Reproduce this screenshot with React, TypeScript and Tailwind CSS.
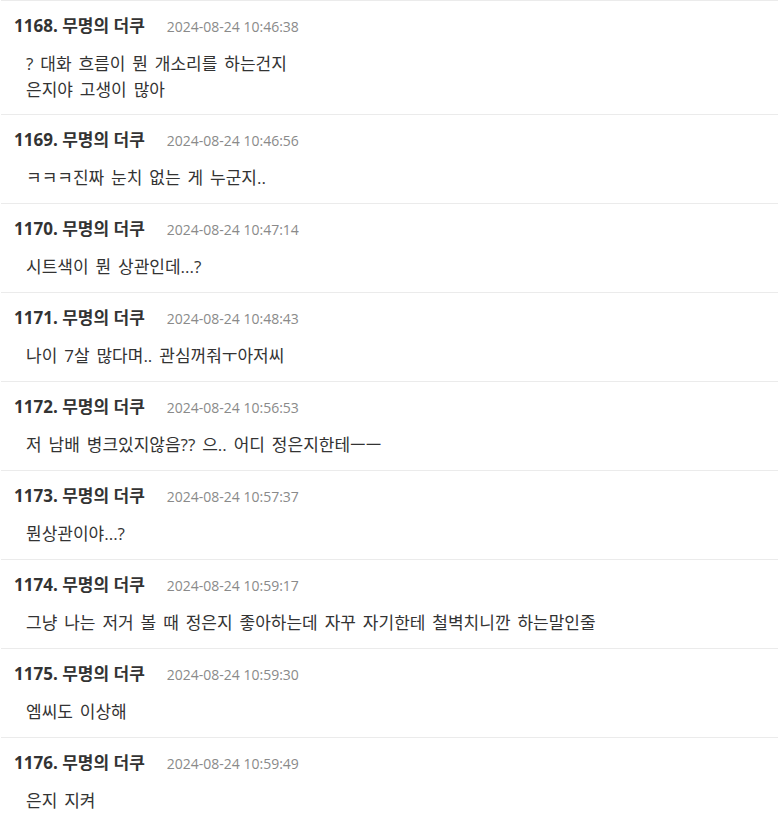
import React from "react";

const comments = [
  { no: 1168, date: "2024-08-24 10:46:38", lines: ["? 대화 흐름이 뭔 개소리를 하는건지", "은지야 고생이 많아"] },
  { no: 1169, date: "2024-08-24 10:46:56", lines: ["ㅋㅋㅋ진짜 눈치 없는 게 누군지.."] },
  { no: 1170, date: "2024-08-24 10:47:14", lines: ["시트색이 뭔 상관인데...?"] },
  { no: 1171, date: "2024-08-24 10:48:43", lines: ["나이 7살 많다며.. 관심꺼줘ㅜ아저씨"] },
  { no: 1172, date: "2024-08-24 10:56:53", lines: ["저 남배 병크있지않음?? 으.. 어디 정은지한테ㅡㅡ"] },
  { no: 1173, date: "2024-08-24 10:57:37", lines: ["뭔상관이야...?"] },
  { no: 1174, date: "2024-08-24 10:59:17", lines: ["그냥 나는 저거 볼 때 정은지 좋아하는데 자꾸 자기한테 철벽치니깐 하는말인줄"] },
  { no: 1175, date: "2024-08-24 10:59:30", lines: ["엠씨도 이상해"] },
  { no: 1176, date: "2024-08-24 10:59:49", lines: ["은지 지켜"] },
];

function Comment({ no, date, lines, first }: { no: number; date: string; lines: string[]; first: boolean }) {
  return (
    <div className={`border-t border-[#ebebeb] pt-[13px] ${first ? "pb-[11px]" : "pb-[12px]"}`}>
      <div className="flex items-center pl-[13px] h-[24px]">
        <span className="text-[17px] font-bold text-[#333]">{no}. 무명의 더쿠</span>
        <span className="ml-[22px] text-[14px] text-[#8a8a8a]">{date}</span>
      </div>
      <div className="mt-[13px] pl-[25px] text-[17px] leading-[26px] text-[#333] [word-spacing:2.5px]">
        {lines.map((l, i) => (
          <p key={i}>{l}</p>
        ))}
      </div>
    </div>
  );
}

export default function App() {
  return (
    <div
      className="min-h-screen bg-white ml-px overflow-hidden"
      style={{ fontFamily: '"Open Sans", "Noto Sans CJK KR", sans-serif' }}
    >
      {comments.map((c, i) => (
        <Comment key={c.no} {...c} first={i === 0} />
      ))}
    </div>
  );
}
